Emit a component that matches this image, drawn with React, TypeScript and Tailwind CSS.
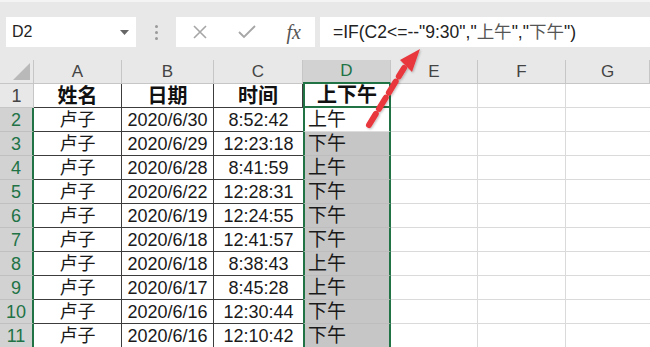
import React from 'react';

const rows = [
  { date: '2020/6/30', time: '8:52:42', ap: '上午' },
  { date: '2020/6/29', time: '12:23:18', ap: '下午' },
  { date: '2020/6/28', time: '8:41:59', ap: '上午' },
  { date: '2020/6/22', time: '12:28:31', ap: '下午' },
  { date: '2020/6/19', time: '12:24:55', ap: '下午' },
  { date: '2020/6/18', time: '12:41:57', ap: '下午' },
  { date: '2020/6/18', time: '8:38:43', ap: '上午' },
  { date: '2020/6/17', time: '8:45:28', ap: '上午' },
  { date: '2020/6/16', time: '12:30:44', ap: '下午' },
  { date: '2020/6/16', time: '12:10:42', ap: '下午' },
];

const font = { fontFamily: '"Liberation Sans", "Noto Sans CJK SC", sans-serif' };

const cols = 'grid grid-cols-[34px_88px_92px_89px_88px_87px_88px_1fr] grid-rows-[24px]';

const Arrow = () => (
  <svg className="absolute left-0 top-0 pointer-events-none" width="650" height="347">
    <defs>
      <filter id="sh" x="-20%" y="-20%" width="140%" height="140%">
        <feDropShadow dx="1" dy="1" stdDeviation="1" floodColor="#000" floodOpacity="0.25" />
      </filter>
    </defs>
    <g filter="url(#sh)">
      <line x1="369" y1="125" x2="404" y2="68" stroke="#e8383d" strokeWidth="6" strokeDasharray="13 6" strokeLinecap="round" />
      <polygon points="420,49 400,60 412,72" fill="#e8383d" />
    </g>
  </svg>
);

export default function App() {
  return (
    <div className="relative w-[650px] h-[347px] overflow-hidden bg-white" style={font}>
      {/* formula bar */}
      <div className="h-[60px] bg-[#e8e8e8] border-t-[2px] border-[#f4f4f4] flex items-start pt-[15px] pl-[6px]">
        <div className="w-[130px] h-[30px] bg-white flex items-center justify-between pl-[6px] pr-[7px]">
          <span className="text-[16px] text-[#222]">D2</span>
          <svg width="9" height="5" viewBox="0 0 9 5"><path d="M0 0h9L4.5 5z" fill="#666" /></svg>
        </div>
        <div className="w-[40px] h-[30px] flex flex-col items-center justify-center gap-[3px]">
          <span className="w-[3px] h-[3px] rounded-full bg-[#9a9a9a]" />
          <span className="w-[3px] h-[3px] rounded-full bg-[#9a9a9a]" />
          <span className="w-[3px] h-[3px] rounded-full bg-[#9a9a9a]" />
        </div>
        <div className="w-[139px] h-[30px] bg-white flex items-center justify-between pl-[17px] pr-[14px]">
          <svg width="14" height="14" viewBox="0 0 14 14"><path d="M1 1l12 12M13 1L1 13" stroke="#a6a6a6" strokeWidth="1.6" /></svg>
          <svg width="18" height="14" viewBox="0 0 18 14"><path d="M1 7l5 5L17 1" stroke="#a6a6a6" strokeWidth="1.8" fill="none" /></svg>
          <span className="text-[20px] italic text-[#555]" style={{ fontFamily: '"Liberation Serif", serif' }}>fx</span>
        </div>
        <div className="ml-[5px] flex-1 h-[30px] bg-white flex items-center pl-[13px]">
          <span className="text-[17.5px] leading-[22px] text-[#222] whitespace-nowrap">
            =IF(C2&lt;=--"9:30","<span className="text-[#555]">上午</span>","<span className="text-[#555]">下午</span>")
          </span>
        </div>
      </div>

      {/* column headers */}
      <div className={`${cols} h-[24px] bg-[#e8e8e8] text-[17px] leading-[22px] text-[#444]`}>
        <div className="relative border-r border-b border-[#c6c6c6]">
          <svg className="absolute right-[3px] bottom-[3px]" width="17" height="17" viewBox="0 0 17 17"><path d="M17 0v17H0z" fill="#b9b9b9" /></svg>
        </div>
        {['A', 'B', 'C'].map((c) => (
          <div key={c} className="flex items-center justify-center border-r border-b border-[#c6c6c6]">{c}</div>
        ))}
        <div className="flex items-center justify-center bg-[#d2d2d2] text-[#217346] border-r border-[#c6c6c6] border-b-2 border-b-[#217346]">D</div>
        {['E', 'F', 'G'].map((c) => (
          <div key={c} className="flex items-center justify-center border-r border-b border-[#c6c6c6]">{c}</div>
        ))}
      </div>

      {/* header row */}
      <div className={`${cols} h-[24px] text-[20px] leading-[22px] text-[#111]`}>
        <div className="flex items-center justify-center bg-[#e8e8e8] text-[#444] text-[18px] border-r border-b border-[#c6c6c6]">1</div>
        {['姓名', '日期', '时间'].map((h) => (
          <div key={h} className="flex items-center justify-center font-bold border-r border-b border-[#3c3c3c]">{h}</div>
        ))}
        <div className="flex items-center justify-center font-bold border-x-2 border-x-[#217346] border-b-2 border-b-[#217346]">上下午</div>
        <div className="border-r border-b border-[#dadada]" />
        <div className="border-r border-b border-[#dadada]" />
        <div className="border-b border-[#dadada]" />
      </div>

      {/* data rows */}
      {rows.map((r, i) => (
        <div key={i} className={`${cols} h-[24px] text-[18px] leading-[22px] text-[#1a1a1a]`}>
          <div className="flex items-center justify-center bg-[#d2d2d2] text-[#217346] border-b border-[#c0c0c0] border-r-2 border-r-[#217346]">{i + 2}</div>
          <div className="flex items-center justify-center border-r border-b border-[#3c3c3c]">卢子</div>
          <div className="flex items-center justify-center border-r border-b border-[#3c3c3c]">{r.date}</div>
          <div className="flex items-center justify-center border-b border-[#3c3c3c]">{r.time}</div>
          <div className={`flex items-center pl-[3px] text-[19px] border-x-2 border-x-[#217346] border-b ${i === 0 ? 'bg-white border-b-[#dcdcdc]' : 'bg-[#c6c6c6] border-b-[#bdbdbd]'}`}>{r.ap}</div>
          <div className="border-r border-b border-[#dadada]" />
          <div className="border-r border-b border-[#dadada]" />
          <div className="border-b border-[#dadada]" />
        </div>
      ))}

      <Arrow />
    </div>
  );
}
